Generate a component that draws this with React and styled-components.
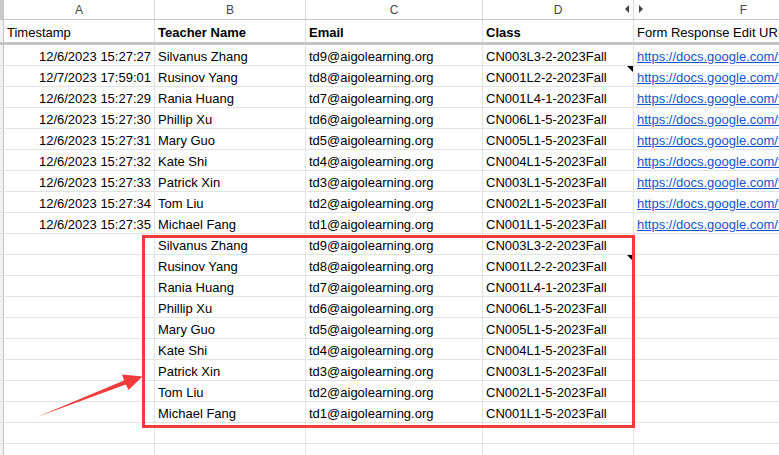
import React from 'react'
import styled, { createGlobalStyle } from 'styled-components'

// a spreadsheet view with copied rows boxed and pointed at

const Global = createGlobalStyle`
  html, body {
    margin: 0;
    padding: 0;
    background: #ffffff;
    overflow: hidden;
  }
`

const COLS = [151, 151, 177, 151, 220]

const people = [
  ['12/6/2023 15:27:27', 'Silvanus Zhang', 'td9@aigolearning.org', 'CN003L3-2-2023Fall'],
  ['12/7/2023 17:59:01', 'Rusinov Yang', 'td8@aigolearning.org', 'CN001L2-2-2023Fall', true],
  ['12/6/2023 15:27:29', 'Rania Huang', 'td7@aigolearning.org', 'CN001L4-1-2023Fall'],
  ['12/6/2023 15:27:30', 'Phillip Xu', 'td6@aigolearning.org', 'CN006L1-5-2023Fall'],
  ['12/6/2023 15:27:31', 'Mary Guo', 'td5@aigolearning.org', 'CN005L1-5-2023Fall'],
  ['12/6/2023 15:27:32', 'Kate Shi', 'td4@aigolearning.org', 'CN004L1-5-2023Fall'],
  ['12/6/2023 15:27:33', 'Patrick Xin', 'td3@aigolearning.org', 'CN003L1-5-2023Fall'],
  ['12/6/2023 15:27:34', 'Tom Liu', 'td2@aigolearning.org', 'CN002L1-5-2023Fall'],
  ['12/6/2023 15:27:35', 'Michael Fang', 'td1@aigolearning.org', 'CN001L1-5-2023Fall'],
]

const App = () => {
  return (
    <>
      <Global />
      <Sheet>
        <LetterRow>
          <Gutter $top />
          {['A', 'B', 'C', 'D', 'F'].map((l, i) => (
            <Letter key={l} $w={COLS[i]}>
              {l}
              {l === 'D' && <HideArrow $side="left" />}
              {l === 'F' && <HideArrow $side="right" />}
            </Letter>
          ))}
        </LetterRow>

        <HeaderRow>
          <Gutter />
          <Cell $w={COLS[0]}>Timestamp</Cell>
          <Cell $w={COLS[1]} $bold>Teacher Name</Cell>
          <Cell $w={COLS[2]} $bold>Email</Cell>
          <Cell $w={COLS[3]} $bold>Class</Cell>
          <Cell $w={COLS[4]}>Form Response Edit URL</Cell>
        </HeaderRow>

        {people.map((p) => (
          <Row key={p[2]}>
            <Gutter />
            <Cell $w={COLS[0]} $right>{p[0]}</Cell>
            <Cell $w={COLS[1]}>{p[1]}</Cell>
            <Cell $w={COLS[2]}>{p[2]}</Cell>
            <Cell $w={COLS[3]}>{p[3]}{p[4] && <Note />}</Cell>
            <Cell $w={COLS[4]}><Link>https://docs.google.com/forms/d/e/1FAIpQL</Link></Cell>
          </Row>
        ))}

        {people.map((p) => (
          <Row key={'copy' + p[2]}>
            <Gutter />
            <Cell $w={COLS[0]} />
            <Cell $w={COLS[1]}>{p[1]}</Cell>
            <Cell $w={COLS[2]}>{p[2]}</Cell>
            <Cell $w={COLS[3]}>{p[3]}{p[4] && <Note />}</Cell>
            <Cell $w={COLS[4]} />
          </Row>
        ))}

        {[0, 1].map((i) => (
          <Row key={'empty' + i}>
            <Gutter />
            {COLS.map((w, j) => <Cell key={j} $w={w} />)}
          </Row>
        ))}

        <Highlight />
        <Arrow width="779" height="455" viewBox="0 0 779 455">
          <polygon
            points="37,417 124,380.4 122,374.5 142.5,376.5 128.5,390 125.8,384.6"
            fill="#f23b3b"
          />
        </Arrow>
      </Sheet>
    </>
  )
}

// whole grid
const Sheet = styled.div`
  position: relative;
  width: 779px;
  height: 455px;
  overflow: hidden;
  font-family: 'Liberation Sans', Arial, sans-serif;
  font-size: 13px;
  color: #000000;
`

const Row = styled.div`
  display: flex;
  height: 20px;
  border-bottom: 1px solid #e2e3e3;
`

const LetterRow = styled(Row)`
  height: 19px;
  border-bottom: 1px solid #c4c7c5;
`

// header row with the frozen line under it
const HeaderRow = styled(Row)`
  height: 22px;
  border-bottom: 3px solid #c4c4c4;
`

const Gutter = styled.div`
  flex: 0 0 3px;
  background: ${(p) => (p.$top ? '#c9c9c9' : '#f1f1f1')};
  border-right: 1px solid #c4c4c4;
`

const Letter = styled.div`
  position: relative;
  flex: 0 0 ${(p) => p.$w - 1}px;
  border-right: 1px solid #dadada;
  display: flex;
  align-items: center;
  justify-content: center;
  font-size: 12px;
  color: #444746;
`

// little arrows for the hidden column E
const HideArrow = styled.span`
  position: absolute;
  top: 5px;
  ${(p) => (p.$side === 'left' ? 'right: 4px;' : 'left: 5px;')}
  width: 0;
  height: 0;
  border-top: 4px solid transparent;
  border-bottom: 4px solid transparent;
  ${(p) => (p.$side === 'left' ? 'border-right: 4px solid #444;' : 'border-left: 4px solid #444;')}
`

const Cell = styled.div`
  position: relative;
  flex: 0 0 ${(p) => p.$w}px;
  box-sizing: border-box;
  border-right: 1px solid #e2e3e3;
  padding: 2px 3px 0 3px;
  display: flex;
  align-items: center;
  justify-content: ${(p) => (p.$right ? 'flex-end' : 'flex-start')};
  font-weight: ${(p) => (p.$bold ? 700 : 400)};
  white-space: nowrap;
  overflow: hidden;
`

const Link = styled.span`
  color: #1155cc;
  text-decoration: underline;
`

// comment marker in the top right corner
const Note = styled.span`
  position: absolute;
  top: 0;
  right: 0;
  width: 0;
  height: 0;
  border-top: 6px solid #000;
  border-left: 6px solid transparent;
`

const Highlight = styled.div`
  position: absolute;
  left: 142px;
  top: 235px;
  width: 487px;
  height: 187px;
  border: 3px solid #f23b3b;
  pointer-events: none;
`

const Arrow = styled.svg`
  position: absolute;
  left: 0;
  top: 0;
  pointer-events: none;
`

export default App
